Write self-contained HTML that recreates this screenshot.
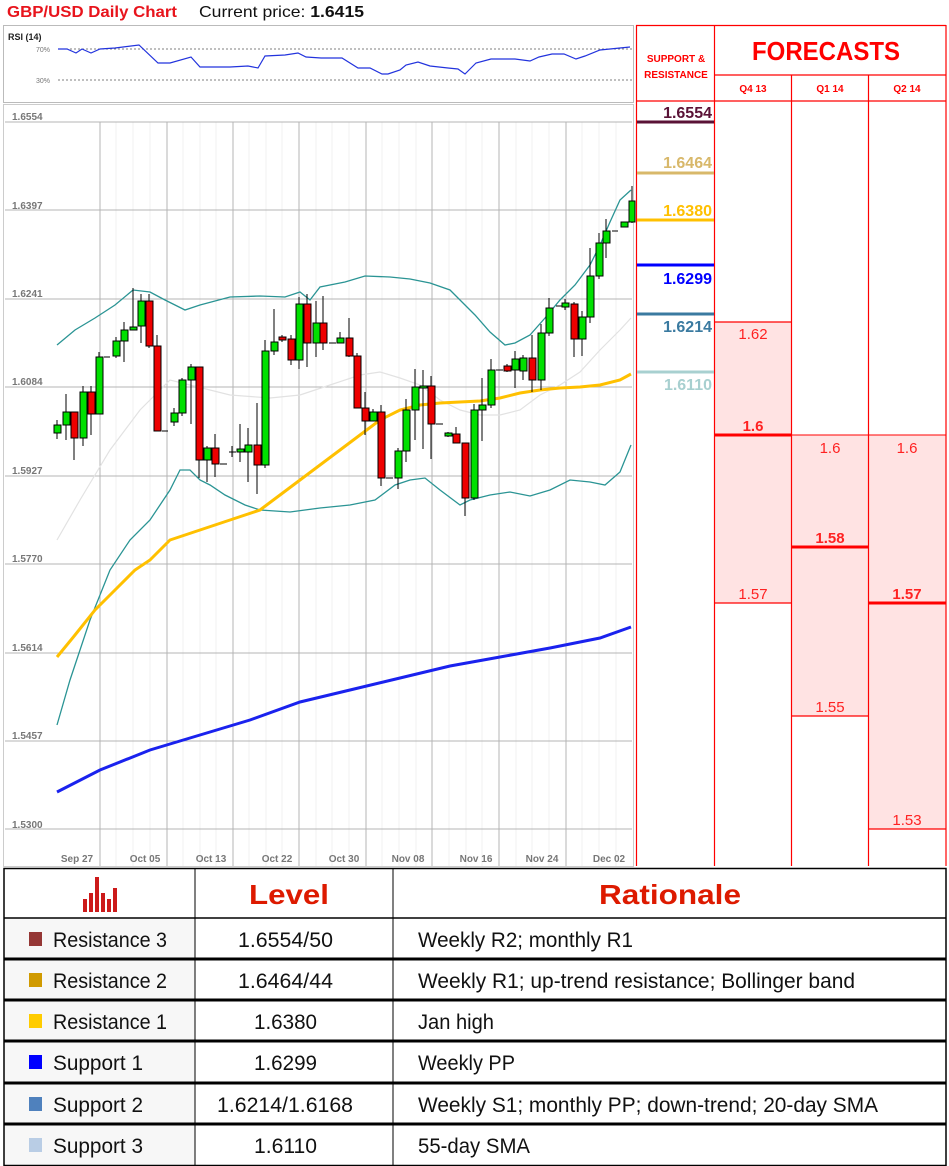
<!DOCTYPE html>
<html><head><meta charset="utf-8"><style>
html,body{margin:0;padding:0;background:#fff;}
svg{display:block;}
text{font-family:"Liberation Sans",sans-serif;}
</style></head><body>
<svg width="949" height="1166" viewBox="0 0 949 1166" xmlns="http://www.w3.org/2000/svg">
<text x="7" y="17" font-size="16" fill="#e8141c" font-weight="bold" textLength="170" lengthAdjust="spacingAndGlyphs">GBP/USD Daily Chart</text>
<text x="199" y="17" font-size="16" fill="#111" textLength="165" lengthAdjust="spacingAndGlyphs">Current price: <tspan font-weight="bold">1.6415</tspan></text>

<rect x="3.5" y="25.5" width="630" height="77" fill="#fff" stroke="#bbb"/>
<text x="8" y="40" font-size="9" font-weight="bold" fill="#222">RSI (14)</text>
<text x="36" y="52" font-size="7" fill="#777">70%</text>
<text x="36" y="83" font-size="7" fill="#777">30%</text>
<line x1="58" y1="49" x2="632" y2="49" stroke="#555" stroke-dasharray="2,2" stroke-width="0.8"/>
<line x1="58" y1="80" x2="632" y2="80" stroke="#555" stroke-dasharray="2,2" stroke-width="0.8"/>
<polyline fill="none" stroke="#2233dd" stroke-width="1.2" points="58,49 67,49 76,53 82,49 91,53 100,49 115,48 139,45 158,63 170,63 191,57 200,67 212,67 230,67 248,66 258,68 265,56 285,55 298,53 306,57 321,58 342,58 358,68 370,68 382,74 388,74 400,70 406,65 418,62 430,66 448,68 458,69 465,74 476,63 491,59 515,59 530,61 539,57 552,54 564,54 576,59 585,56 600,50 630,47"/>

<rect x="3.5" y="104.5" width="630" height="762" fill="#fff" stroke="#ccc"/>
<g stroke="#f0f0f0" stroke-width="1">
<line x1="116" y1="122" x2="116" y2="866"/><line x1="133" y1="122" x2="133" y2="866"/><line x1="150" y1="122" x2="150" y2="866"/>
<line x1="183" y1="122" x2="183" y2="866"/><line x1="200" y1="122" x2="200" y2="866"/><line x1="216" y1="122" x2="216" y2="866"/>
<line x1="249" y1="122" x2="249" y2="866"/><line x1="266" y1="122" x2="266" y2="866"/><line x1="282" y1="122" x2="282" y2="866"/>
<line x1="316" y1="122" x2="316" y2="866"/><line x1="332" y1="122" x2="332" y2="866"/><line x1="349" y1="122" x2="349" y2="866"/>
<line x1="382" y1="122" x2="382" y2="866"/><line x1="399" y1="122" x2="399" y2="866"/><line x1="416" y1="122" x2="416" y2="866"/>
<line x1="449" y1="122" x2="449" y2="866"/><line x1="466" y1="122" x2="466" y2="866"/><line x1="482" y1="122" x2="482" y2="866"/>
<line x1="516" y1="122" x2="516" y2="866"/><line x1="532" y1="122" x2="532" y2="866"/><line x1="549" y1="122" x2="549" y2="866"/>
<line x1="582" y1="122" x2="582" y2="866"/><line x1="599" y1="122" x2="599" y2="866"/><line x1="616" y1="122" x2="616" y2="866"/>
</g>
<g stroke="#b4b4b4" stroke-width="1">
<line x1="5" y1="122" x2="632" y2="122"/><line x1="5" y1="210" x2="632" y2="210"/><line x1="5" y1="299" x2="632" y2="299"/>
<line x1="5" y1="387" x2="632" y2="387"/><line x1="5" y1="476" x2="632" y2="476"/><line x1="5" y1="564" x2="632" y2="564"/>
<line x1="5" y1="653" x2="632" y2="653"/><line x1="5" y1="741" x2="632" y2="741"/><line x1="5" y1="829" x2="632" y2="829"/>
<line x1="100" y1="122" x2="100" y2="866"/><line x1="167" y1="122" x2="167" y2="866"/><line x1="233" y1="122" x2="233" y2="866"/>
<line x1="299" y1="122" x2="299" y2="866"/><line x1="366" y1="122" x2="366" y2="866"/><line x1="432" y1="122" x2="432" y2="866"/>
<line x1="499" y1="122" x2="499" y2="866"/><line x1="566" y1="122" x2="566" y2="866"/>
</g>
<g font-size="10" font-weight="bold" fill="#777">
<text x="12" y="120">1.6554</text><text x="12" y="209">1.6397</text><text x="12" y="297">1.6241</text>
<text x="12" y="385">1.6084</text><text x="12" y="474">1.5927</text><text x="12" y="562">1.5770</text>
<text x="12" y="651">1.5614</text><text x="12" y="739">1.5457</text><text x="12" y="828">1.5300</text>
</g>
<g font-size="10" font-weight="bold" fill="#777" text-anchor="middle">
<text x="77" y="862">Sep 27</text><text x="145" y="862">Oct 05</text><text x="211" y="862">Oct 13</text>
<text x="277" y="862">Oct 22</text><text x="344" y="862">Oct 30</text><text x="408" y="862">Nov 08</text>
<text x="476" y="862">Nov 16</text><text x="542" y="862">Nov 24</text><text x="609" y="862">Dec 02</text>
</g>

<polyline fill="none" stroke="#e2e2e2" stroke-width="1.2" points="57,540 80,500 110,450 140,410 170,380 190,385 230,395 270,398 300,395 330,385 360,375 380,372 400,378 420,385 440,400 460,410 480,415 500,415 520,410 540,395 560,385 580,372 600,350 620,330 631,318"/>
<polyline fill="none" stroke="#2a9494" stroke-width="1.3" points="57,345 75,330 95,318 115,305 133,290 150,292 165,300 175,305 185,310 200,305 230,297 260,296 285,297 300,292 310,300 320,287 345,282 365,276 390,277 410,279 430,283 450,290 460,300 475,315 490,332 505,345 515,343 530,335 545,318 560,300 575,285 590,265 600,245 610,222 620,200 631,190"/>
<polyline fill="none" stroke="#2a9494" stroke-width="1.3" points="57,725 70,680 90,620 110,570 130,540 150,520 170,490 180,470 190,470 200,480 210,485 225,495 245,505 260,510 290,512 320,508 350,505 375,500 395,485 410,480 425,478 440,490 460,505 470,500 490,495 510,492 530,496 550,490 570,480 590,482 605,485 620,472 631,445"/>
<polyline fill="none" stroke="#ffc000" stroke-width="3" points="57,657 75,635 95,610 115,590 135,570 150,560 170,540 200,530 230,520 260,510 280,495 300,480 320,465 340,450 360,435 380,420 400,410 420,405 440,403 460,402 480,401 500,398 520,393 540,390 560,388 580,387 600,385 620,380 631,374"/>
<polyline fill="none" stroke="#1a22ee" stroke-width="3" points="57,792 100,770 150,750 200,735 250,720 300,702 350,690 400,678 450,666 500,657 550,648 600,638 631,627"/>

<g stroke="#000" stroke-width="1">
<line x1="57" y1="420" x2="57" y2="439"/><rect x="54" y="425" width="7" height="8" fill="#00e000"/>
<line x1="66" y1="394" x2="66" y2="440"/><rect x="63" y="412" width="7" height="13" fill="#00e000"/>
<line x1="74" y1="412" x2="74" y2="460"/><rect x="71" y="412" width="7" height="26" fill="#ee0000"/>
<line x1="83" y1="386" x2="83" y2="446"/><rect x="80" y="392" width="7" height="46" fill="#00e000"/>
<line x1="91" y1="386" x2="91" y2="435"/><rect x="88" y="392" width="7" height="22" fill="#ee0000"/>
<line x1="99" y1="352" x2="99" y2="414"/><rect x="96" y="357" width="7" height="57" fill="#00e000"/>
<line x1="104" y1="357" x2="110" y2="357"/>
<line x1="116" y1="337" x2="116" y2="358"/><rect x="113" y="341" width="7" height="15" fill="#00e000"/>
<line x1="124" y1="322" x2="124" y2="362"/><rect x="121" y="330" width="7" height="11" fill="#00e000"/>
<line x1="133" y1="288" x2="133" y2="330"/><rect x="130" y="327" width="7" height="3" fill="#00e000"/>
<line x1="141" y1="294" x2="141" y2="343"/><rect x="138" y="301" width="7" height="25" fill="#00e000"/>
<line x1="149" y1="294" x2="149" y2="348"/><rect x="146" y="301" width="7" height="45" fill="#ee0000"/>
<line x1="157" y1="335" x2="157" y2="431"/><rect x="154" y="346" width="7" height="85" fill="#ee0000"/>
<line x1="162" y1="431" x2="168" y2="431"/>
<line x1="174" y1="408" x2="174" y2="426"/><rect x="171" y="413" width="7" height="9" fill="#00e000"/>
<line x1="182" y1="378" x2="182" y2="416"/><rect x="179" y="380" width="7" height="33" fill="#00e000"/>
<line x1="191" y1="364" x2="191" y2="424"/><rect x="188" y="367" width="7" height="13" fill="#00e000"/>
<line x1="199" y1="367" x2="199" y2="478"/><rect x="196" y="367" width="7" height="93" fill="#ee0000"/>
<line x1="207" y1="446" x2="207" y2="482"/><rect x="204" y="448" width="7" height="12" fill="#00e000"/>
<line x1="215" y1="434" x2="215" y2="477"/><rect x="212" y="448" width="7" height="16" fill="#ee0000"/>
<line x1="220" y1="464" x2="227" y2="464"/>
<line x1="232" y1="446" x2="232" y2="457"/><line x1="229" y1="452" x2="236" y2="452"/>
<line x1="240" y1="424" x2="240" y2="462"/><rect x="237" y="449" width="7" height="3" fill="#00e000"/>
<line x1="248" y1="428" x2="248" y2="482"/><rect x="245" y="445" width="7" height="7" fill="#00e000"/>
<line x1="257" y1="403" x2="257" y2="494"/><rect x="254" y="445" width="7" height="20" fill="#ee0000"/>
<line x1="265" y1="340" x2="265" y2="468"/><rect x="262" y="351" width="7" height="114" fill="#00e000"/>
<line x1="274" y1="309" x2="274" y2="355"/><rect x="271" y="342" width="7" height="9" fill="#00e000"/>
<line x1="282" y1="335" x2="282" y2="342"/><rect x="279" y="337" width="7" height="3" fill="#ee0000"/>
<line x1="291" y1="335" x2="291" y2="365"/><rect x="288" y="339" width="7" height="21" fill="#ee0000"/>
<line x1="299" y1="297" x2="299" y2="369"/><rect x="296" y="304" width="7" height="56" fill="#00e000"/>
<line x1="307" y1="294" x2="307" y2="367"/><rect x="304" y="304" width="7" height="39" fill="#ee0000"/>
<line x1="316" y1="301" x2="316" y2="357"/><rect x="313" y="323" width="7" height="20" fill="#00e000"/>
<line x1="323" y1="296" x2="323" y2="350"/><rect x="320" y="323" width="7" height="20" fill="#ee0000"/>
<line x1="329" y1="343" x2="336" y2="343"/>
<line x1="340" y1="332" x2="340" y2="343"/><rect x="337" y="338" width="7" height="5" fill="#00e000"/>
<line x1="349" y1="318" x2="349" y2="357"/><rect x="346" y="338" width="7" height="18" fill="#ee0000"/>
<line x1="357" y1="353" x2="357" y2="408"/><rect x="354" y="356" width="7" height="52" fill="#ee0000"/>
<line x1="365" y1="392" x2="365" y2="435"/><rect x="362" y="408" width="7" height="13" fill="#ee0000"/>
<line x1="373" y1="409" x2="373" y2="421"/><rect x="370" y="412" width="7" height="9" fill="#00e000"/>
<line x1="381" y1="405" x2="381" y2="486"/><rect x="378" y="412" width="7" height="66" fill="#ee0000"/>
<line x1="386" y1="478" x2="393" y2="478"/>
<line x1="398" y1="448" x2="398" y2="489"/><rect x="395" y="451" width="7" height="27" fill="#00e000"/>
<line x1="406" y1="399" x2="406" y2="462"/><rect x="403" y="410" width="7" height="41" fill="#00e000"/>
<line x1="415" y1="369" x2="415" y2="440"/><rect x="412" y="387" width="7" height="23" fill="#00e000"/>
<line x1="423" y1="370" x2="423" y2="449"/><rect x="420" y="386" width="7" height="2" fill="#00e000"/>
<line x1="431" y1="376" x2="431" y2="459"/><rect x="428" y="386" width="7" height="38" fill="#ee0000"/>
<line x1="436" y1="424" x2="443" y2="424"/>
<line x1="448" y1="432" x2="448" y2="437"/><rect x="445" y="433" width="7" height="3" fill="#00e000"/>
<line x1="456" y1="427" x2="456" y2="443"/><rect x="453" y="434" width="7" height="9" fill="#ee0000"/>
<line x1="465" y1="443" x2="465" y2="516"/><rect x="462" y="443" width="7" height="55" fill="#ee0000"/>
<line x1="474" y1="404" x2="474" y2="500"/><rect x="471" y="410" width="7" height="88" fill="#00e000"/>
<line x1="482" y1="378" x2="482" y2="441"/><rect x="479" y="405" width="7" height="5" fill="#00e000"/>
<line x1="491" y1="359" x2="491" y2="408"/><rect x="488" y="370" width="7" height="35" fill="#00e000"/>
<line x1="496" y1="370" x2="503" y2="370"/>
<line x1="507" y1="364" x2="507" y2="372"/><rect x="504" y="366" width="7" height="5" fill="#ee0000"/>
<line x1="515" y1="351" x2="515" y2="388"/><rect x="512" y="359" width="7" height="11" fill="#00e000"/>
<line x1="523" y1="355" x2="523" y2="380"/><rect x="520" y="358" width="7" height="13" fill="#00e000"/>
<line x1="532" y1="335" x2="532" y2="392"/><rect x="529" y="358" width="7" height="22" fill="#ee0000"/>
<line x1="541" y1="324" x2="541" y2="390"/><rect x="538" y="333" width="7" height="47" fill="#00e000"/>
<line x1="549" y1="298" x2="549" y2="336"/><rect x="546" y="308" width="7" height="25" fill="#00e000"/>
<line x1="556" y1="306" x2="562" y2="306"/>
<line x1="565" y1="299" x2="565" y2="310"/><rect x="562" y="303" width="7" height="4" fill="#00e000"/>
<line x1="574" y1="302" x2="574" y2="357"/><rect x="571" y="304" width="7" height="35" fill="#ee0000"/>
<line x1="582" y1="311" x2="582" y2="356"/><rect x="579" y="317" width="7" height="22" fill="#00e000"/>
<line x1="590" y1="248" x2="590" y2="323"/><rect x="587" y="276" width="7" height="41" fill="#00e000"/>
<line x1="599" y1="233" x2="599" y2="279"/><rect x="596" y="243" width="7" height="33" fill="#00e000"/>
<line x1="606" y1="219" x2="606" y2="258"/><rect x="603" y="231" width="7" height="12" fill="#00e000"/>
<line x1="612" y1="231" x2="618" y2="231"/>
<rect x="621" y="222" width="7" height="5" fill="#00e000"/>
<line x1="632" y1="186" x2="632" y2="223"/><rect x="629" y="201" width="6" height="21" fill="#00e000"/>
</g>

<rect x="714" y="322" width="77" height="281" fill="#ffe3e3"/>
<rect x="791" y="435" width="77" height="281" fill="#ffe3e3"/>
<rect x="868" y="435" width="78" height="394" fill="#ffe3e3"/>
<g stroke="#ff0000" stroke-width="1.2">
<line x1="636" y1="25.5" x2="946" y2="25.5"/>
<line x1="714" y1="75" x2="946" y2="75"/>
<line x1="636" y1="101" x2="946" y2="101"/>
<line x1="636.5" y1="25" x2="636.5" y2="866"/>
<line x1="714.5" y1="25" x2="714.5" y2="866"/>
<line x1="791.5" y1="75" x2="791.5" y2="866"/>
<line x1="868.5" y1="75" x2="868.5" y2="866"/>
<line x1="946" y1="25" x2="946" y2="866"/>
<line x1="714" y1="322" x2="791" y2="322"/>
<line x1="714" y1="603" x2="791" y2="603"/>
<line x1="791" y1="716" x2="868" y2="716"/>
<line x1="868" y1="829" x2="946" y2="829"/>
</g>
<g stroke="#ff0000" stroke-width="3">
<line x1="714" y1="435" x2="791" y2="435"/>
<line x1="791" y1="547" x2="868" y2="547"/>
<line x1="868" y1="603" x2="946" y2="603"/>
</g>
<line x1="791" y1="435" x2="946" y2="435" stroke="#ff0000" stroke-width="1"/>
<g fill="#ff0000" font-weight="bold" text-anchor="middle">
<text x="676" y="62" font-size="10">SUPPORT &amp;</text>
<text x="676" y="78" font-size="10">RESISTANCE</text>
<text x="826" y="60" font-size="26" textLength="148" lengthAdjust="spacingAndGlyphs">FORECASTS</text>
<text x="753" y="92" font-size="10">Q4 13</text>
<text x="830" y="92" font-size="10">Q1 14</text>
<text x="907" y="92" font-size="10">Q2 14</text>
</g>
<g fill="#ff2222" font-size="15" text-anchor="middle">
<text x="753" y="339">1.62</text>
<text x="753" y="431" font-weight="bold">1.6</text>
<text x="753" y="599">1.57</text>
<text x="830" y="453">1.6</text>
<text x="830" y="543" font-weight="bold">1.58</text>
<text x="830" y="712">1.55</text>
<text x="907" y="453">1.6</text>
<text x="907" y="599" font-weight="bold">1.57</text>
<text x="907" y="825">1.53</text>
</g>
<g stroke-width="3">
<line x1="637" y1="122" x2="714" y2="122" stroke="#5a1236"/>
<line x1="637" y1="173" x2="714" y2="173" stroke="#d8b86a"/>
<line x1="637" y1="220" x2="714" y2="220" stroke="#ffc000"/>
<line x1="637" y1="265" x2="714" y2="265" stroke="#0000ff"/>
<line x1="637" y1="314" x2="714" y2="314" stroke="#3a7aa0"/>
<line x1="637" y1="372" x2="714" y2="372" stroke="#a8d0d0"/>
</g>
<g font-size="16" font-weight="bold" text-anchor="end">
<text x="712" y="118" fill="#5a1236">1.6554</text>
<text x="712" y="168" fill="#d8b86a">1.6464</text>
<text x="712" y="216" fill="#ffc000">1.6380</text>
<text x="712" y="284" fill="#0000ff">1.6299</text>
<text x="712" y="332" fill="#3a7aa0">1.6214</text>
<text x="712" y="390" fill="#a8d0d0">1.6110</text>
</g>

<rect x="4" y="918" width="191" height="247" fill="#f7f7f7"/>
<g stroke="#000">
<rect x="4" y="868.5" width="942" height="297" fill="none" stroke-width="1.5"/>
<line x1="4" y1="918" x2="946" y2="918" stroke-width="1.5"/>
<line x1="4" y1="959" x2="946" y2="959" stroke-width="3"/>
<line x1="4" y1="1000" x2="946" y2="1000" stroke-width="3"/>
<line x1="4" y1="1041" x2="946" y2="1041" stroke-width="3"/>
<line x1="4" y1="1083" x2="946" y2="1083" stroke-width="3"/>
<line x1="4" y1="1124" x2="946" y2="1124" stroke-width="3"/>
<line x1="195" y1="868" x2="195" y2="1166" stroke-width="1"/>
<line x1="393" y1="868" x2="393" y2="1166" stroke-width="1"/>
</g>
<g fill="#cc1a1a">
<rect x="83" y="899" width="4" height="13"/><rect x="89" y="893" width="4" height="19"/>
<rect x="95" y="877" width="4" height="35"/><rect x="101" y="893" width="4" height="19"/>
<rect x="107" y="899" width="4" height="13"/><rect x="113" y="888" width="4" height="24"/>
</g>
<text x="289" y="904" font-size="28" font-weight="bold" fill="#dd1a00" text-anchor="middle" textLength="80" lengthAdjust="spacingAndGlyphs">Level</text>
<text x="670" y="904" font-size="28" font-weight="bold" fill="#dd1a00" text-anchor="middle" textLength="142" lengthAdjust="spacingAndGlyphs">Rationale</text>
<rect x="29" y="932" width="13" height="14" fill="#953735"/>
<rect x="29" y="973" width="13" height="14" fill="#d09a00"/>
<rect x="29" y="1014" width="13" height="14" fill="#ffcc00"/>
<rect x="29" y="1055" width="13" height="14" fill="#0000ff"/>
<rect x="29" y="1097" width="13" height="14" fill="#4f81bd"/>
<rect x="29" y="1138" width="13" height="14" fill="#b9cde5"/>
<g font-size="21" fill="#111">
<text x="53" y="947" textLength="114" lengthAdjust="spacingAndGlyphs">Resistance 3</text>
<text x="53" y="988" textLength="114" lengthAdjust="spacingAndGlyphs">Resistance 2</text>
<text x="53" y="1029" textLength="114" lengthAdjust="spacingAndGlyphs">Resistance 1</text>
<text x="53" y="1070" textLength="90" lengthAdjust="spacingAndGlyphs">Support 1</text>
<text x="53" y="1112" textLength="90" lengthAdjust="spacingAndGlyphs">Support 2</text>
<text x="53" y="1153" textLength="90" lengthAdjust="spacingAndGlyphs">Support 3</text>
</g>
<g font-size="21" fill="#111">
<text x="238" y="947" textLength="95" lengthAdjust="spacingAndGlyphs">1.6554/50</text>
<text x="238" y="988" textLength="95" lengthAdjust="spacingAndGlyphs">1.6464/44</text>
<text x="254" y="1029" textLength="63" lengthAdjust="spacingAndGlyphs">1.6380</text>
<text x="254" y="1070" textLength="63" lengthAdjust="spacingAndGlyphs">1.6299</text>
<text x="217" y="1112" textLength="136" lengthAdjust="spacingAndGlyphs">1.6214/1.6168</text>
<text x="254" y="1153" textLength="63" lengthAdjust="spacingAndGlyphs">1.6110</text>
</g>
<g font-size="21" fill="#111">
<text x="418" y="947" textLength="215" lengthAdjust="spacingAndGlyphs">Weekly R2; monthly R1</text>
<text x="418" y="988" textLength="437" lengthAdjust="spacingAndGlyphs">Weekly R1; up-trend resistance; Bollinger band</text>
<text x="418" y="1029" textLength="76" lengthAdjust="spacingAndGlyphs">Jan high</text>
<text x="418" y="1070" textLength="97" lengthAdjust="spacingAndGlyphs">Weekly PP</text>
<text x="418" y="1112" textLength="460" lengthAdjust="spacingAndGlyphs">Weekly S1; monthly PP; down-trend; 20-day SMA</text>
<text x="418" y="1153" textLength="112" lengthAdjust="spacingAndGlyphs">55-day SMA</text>
</g>
</svg>
</body></html>
